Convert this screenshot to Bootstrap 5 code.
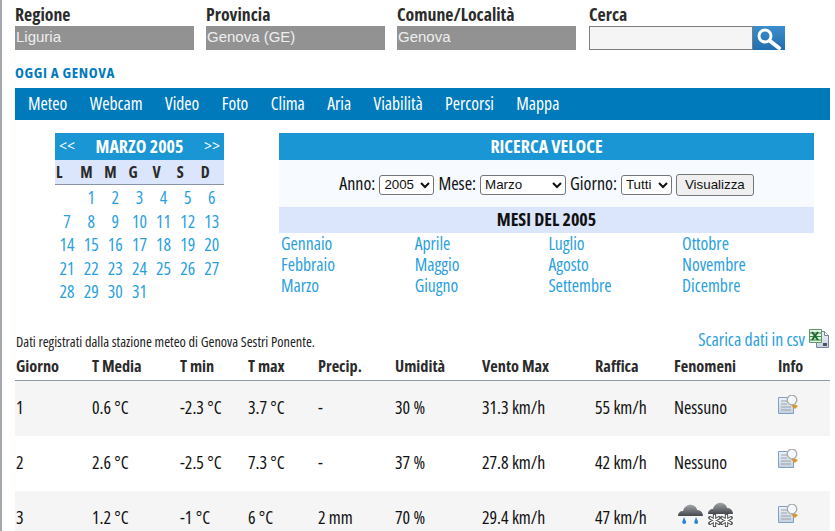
<!DOCTYPE html>
<html lang="it">
<head>
    <meta charset="UTF-8">
    <meta name="viewport" content="width=device-width, initial-scale=1.0">
    <title>Archivio meteo Genova</title>
    <link href="https://cdn.jsdelivr.net/npm/bootstrap@5.3.0/dist/css/bootstrap.min.css" rel="stylesheet">
    <style>
        body {
            font-family: "Open Sans", sans-serif;
            font-stretch: 75%;
            font-size: 16px;
            color: #111;
            background: #fff;
            border-left: 2px solid #a3a9ae;
            overflow: hidden;
            height: 531px;
        }
        a { color: #2a9fdf; text-decoration: none; }
        .page-wrap { width: 815px; margin-left: 13px; }
        .filter-row { padding-top: 3px; height: 66px; }
        .filter-col { width: 191px; flex: none; }
        .filter-search { margin-left: 1px; }
        .filter-label { font-weight: 700; font-size: 17.8px; line-height: 23px; color: #2b2b2b; }
        .filter-box {
            width: 179px; height: 24px; background: #929292; color: #eee;
            font: 15px/22px "Liberation Sans", sans-serif; padding-left: 1px;
        }
        .search-input {
            width: 164px; height: 24px; background: #f5f5f5; border: 1px solid #7d7d7d;
            display: block; padding: 0; flex: none;
        }
        .search-btn { width: 32px; height: 24px; background: linear-gradient(#3c8dcc, #1f6fb0); border: 0; padding: 0; flex: none; }
        .search-btn svg { display: block; }
        .today-title { font-weight: 700; font-size: 15px; letter-spacing: .6px; color: #017abc; line-height: 12px; height: 22px; margin: 0; }
        .main-menu { background: #017abc; height: 32px; padding-left: 13px; gap: 22.4px; font-size: 17.6px; line-height: 30px; }
        .main-menu a { color: #fff; }
        .top-area { height: 206px; padding-top: 13px; }
        .cal-box { width: 169px; margin-left: 40px; margin-right: 55px; }
        .blue-head { background: #1a96d4; color: #fff; font-weight: 700; font-size: 18px; height: 27px; line-height: 27px; }
        .blue-head a { color: #fff; font: 14px/25px "Open Sans", sans-serif; font-stretch: 100%; }
        .cal-grid { display: grid; grid-template-columns: repeat(7, 24.14px); text-align: center; font-size: 17.6px; line-height: 23.6px; }
        .cal-dates { padding-top: 1px; }
        .cal-days { background: #dbe6fd; font-weight: 700; font-size: 16px; height: 25px; line-height: 25px; border-bottom: 1px solid #8a93a8; color: #2b2b2b; text-align: left; padding-left: 1px; }
        .quick-box { width: 535px; }
        .quick-form { background: #f7faff; height: 47px; font-size: 18px; gap: 4px; }
        .quick-form select {
            font: 13.33px "Liberation Sans", sans-serif; height: 20px; background: #fff; color: #111;
            border: 1px solid #767676; border-radius: 3px; padding: 0; margin-top: 2px;
        }
        .quick-form button {
            font: 13.33px "Liberation Sans", sans-serif; height: 22px; padding: 0 8px; margin-top: 2px;
            border: 1px solid #767676; border-radius: 3px; background: #efefef; color: #111;
        }
        .sel-year { width: 55px; }
        .sel-month { width: 86px; }
        .sel-day { width: 51px; }
        .months-head { background: #dbe6fd; font-weight: 700; font-size: 18px; height: 26px; line-height: 24px; color: #111; }
        .months-grid { display: grid; grid-template-columns: repeat(4, 133.7px); grid-auto-flow: column; grid-template-rows: repeat(3, 21px); padding-left: 2px; font-size: 17.6px; line-height: 21px; }
        .note-row { height: 28px; padding-bottom: 3px; }
        .note-text { font-size: 14.3px; color: #222; line-height: 18px; padding-left: 1px; }
        .csv-link { font-size: 17.8px; line-height: 20px; margin-bottom: 2px; margin-right: 1px; }
        .csv-link svg { margin-top: -1px; }
        .meteo-table { width: 815px; table-layout: fixed; border-collapse: collapse; font-size: 17.8px; }
        .meteo-table th { font-weight: 700; font-size: 16.3px; height: 26px; border-bottom: 1px solid #8f98a6; color: #2b2b2b; padding: 0 0 2px 0; }
        .meteo-table td { height: 55px; padding: 0 0 2px 0; color: #111; }
        .meteo-table th:first-child, .meteo-table td:first-child { padding-left: 1px; }
        .meteo-table tr.shade td { background: #f5f5f5; }
        .info-ico { display: block; margin-bottom: 7px; }
        .wx-list { gap: 5px; padding-left: 4px; }
        .wx-list svg { display: block; flex: none; }
        .wx-snow { margin-top: -3px; }
    </style>
</head>
<body>
<svg width="0" height="0" class="position-absolute">
    <defs>
        <linearGradient id="cloud-fill" x1="0" y1="0" x2="0" y2="1">
            <stop offset="0" stop-color="#a2a4a7"/>
            <stop offset="1" stop-color="#44484d"/>
        </linearGradient>
        <linearGradient id="doc-fill" x1="0" y1="0" x2="0" y2="1">
            <stop offset="0" stop-color="#eef3f9"/>
            <stop offset="1" stop-color="#c6d0dc"/>
        </linearGradient>
        <symbol id="info-ico" viewBox="0 0 20 19">
            <path d="M.5 2.500h15v16H.5z" fill="url(#doc-fill)" stroke="#7f9fc6"/>
            <path d="M3 6h6M3 9h6M3 12h10M3 15h10" stroke="#9aa2ad"/>
            <path d="M15 8.500l5 2.500-3 3-3.500-3z" fill="#d99a2b"/>
            <circle cx="14" cy="5" r="4.800" fill="#f4f7fb" stroke="#a8a8a8" stroke-width="1.300"/>
        </symbol>
        <symbol id="cloud-ico" viewBox="0 0 25 12">
            <path d="M0 12c0-3 2-5 5-5 1-4 5-7 9-6 3 .5 5 3 5 5 3 0 6 2 6 6z" fill="url(#cloud-fill)"/>
        </symbol>
        <symbol id="flake-ico" viewBox="0 0 14 14">
            <path d="M7 1v12M2 4l10 6M12 4L2 10" stroke="#4d4f52" stroke-width="3.600" stroke-linecap="round"/>
            <path d="M7 1.500v11M2.500 4.200l9 5.600M11.500 4.200l-9 5.600" stroke="#fff" stroke-width="1.500" stroke-linecap="round"/>
        </symbol>
    </defs>
</svg>
<div class="page-wrap">
    <div class="filter-row d-flex">
        <div class="filter-col"><div class="filter-label">Regione</div><div class="filter-box">Liguria</div></div>
        <div class="filter-col"><div class="filter-label">Provincia</div><div class="filter-box">Genova (GE)</div></div>
        <div class="filter-col"><div class="filter-label">Comune/Località</div><div class="filter-box">Genova</div></div>
        <div class="filter-col filter-search">
            <div class="filter-label">Cerca</div>
            <div class="d-flex">
                <input class="search-input" type="text" aria-label="Cerca">
                <button class="search-btn" type="button" aria-label="Cerca">
                    <svg width="32" height="24" viewBox="0 0 32 24"><circle cx="12" cy="10" r="6" fill="none" stroke="#fff" stroke-width="3"/><path d="M17 15l9 7" stroke="#fff" stroke-width="4" stroke-linecap="round"/></svg>
                </button>
            </div>
        </div>
    </div>
    <h1 class="today-title">OGGI A GENOVA</h1>
    <nav class="main-menu d-flex">
        <a href="#">Meteo</a><a href="#">Webcam</a><a href="#">Video</a><a href="#">Foto</a><a href="#">Clima</a><a href="#">Aria</a><a href="#">Viabilità</a><a href="#">Percorsi</a><a href="#">Mappa</a>
    </nav>
    <div class="top-area d-flex">
        <div class="cal-box">
            <div class="blue-head d-flex justify-content-between px-1">
                <a href="#">&lt;&lt;</a><span>MARZO 2005</span><a href="#">&gt;&gt;</a>
            </div>
            <div class="cal-grid cal-days"><span>L</span><span>M</span><span>M</span><span>G</span><span>V</span><span>S</span><span>D</span></div>
            <div class="cal-grid cal-dates">
                <span></span><a href="#">1</a><a href="#">2</a><a href="#">3</a><a href="#">4</a><a href="#">5</a><a href="#">6</a>
                <a href="#">7</a><a href="#">8</a><a href="#">9</a><a href="#">10</a><a href="#">11</a><a href="#">12</a><a href="#">13</a>
                <a href="#">14</a><a href="#">15</a><a href="#">16</a><a href="#">17</a><a href="#">18</a><a href="#">19</a><a href="#">20</a>
                <a href="#">21</a><a href="#">22</a><a href="#">23</a><a href="#">24</a><a href="#">25</a><a href="#">26</a><a href="#">27</a>
                <a href="#">28</a><a href="#">29</a><a href="#">30</a><a href="#">31</a>
            </div>
        </div>
        <div class="quick-box">
            <div class="blue-head text-center">RICERCA VELOCE</div>
            <form class="quick-form d-flex justify-content-center align-items-center">
                <span>Anno:</span>
                <select class="sel-year"><option>2005</option></select>
                <span>Mese:</span>
                <select class="sel-month"><option>Marzo</option></select>
                <span>Giorno:</span>
                <select class="sel-day"><option>Tutti</option></select>
                <button type="button">Visualizza</button>
            </form>
            <div class="months-head text-center">MESI DEL 2005</div>
            <div class="months-grid">
                <a href="#">Gennaio</a><a href="#">Febbraio</a><a href="#">Marzo</a>
                <a href="#">Aprile</a><a href="#">Maggio</a><a href="#">Giugno</a>
                <a href="#">Luglio</a><a href="#">Agosto</a><a href="#">Settembre</a>
                <a href="#">Ottobre</a><a href="#">Novembre</a><a href="#">Dicembre</a>
            </div>
        </div>
    </div>
    <div class="note-row d-flex justify-content-between align-items-end">
        <div class="note-text">Dati registrati dalla stazione meteo di Genova Sestri Ponente.</div>
        <a class="csv-link d-flex align-items-center gap-1" href="#">Scarica dati in csv
            <svg width="20" height="19" viewBox="0 0 20 19"><path d="M7.500 2.500h8l4 4v12h-12z" fill="url(#doc-fill)" stroke="#75859a"/><path d="M15.500 2.500v4h4" fill="#fff" stroke="#75859a"/><path d="M14 14h4v3h-4z" fill="#4a5564"/><path d="M.5.500h12v13H.5z" fill="#e6f2e4" stroke="#5c9a63"/><path d="M1 4h11M1 7.500h11M1 11h11" stroke="#2f8a45"/><path d="M3 3l6 8M9 3l-6 8" stroke="#1c6b2f" stroke-width="2"/></svg>
        </a>
    </div>
    <table class="meteo-table">
        <colgroup>
            <col style="width:77px"><col style="width:88px"><col style="width:68px"><col style="width:70px"><col style="width:77px"><col style="width:87px"><col style="width:113px"><col style="width:79px"><col style="width:104px"><col style="width:52px">
        </colgroup>
        <thead>
            <tr><th>Giorno</th><th>T Media</th><th>T min</th><th>T max</th><th>Precip.</th><th>Umidità</th><th>Vento Max</th><th>Raffica</th><th>Fenomeni</th><th>Info</th></tr>
        </thead>
        <tbody>
            <tr class="shade"><td>1</td><td>0.6 °C</td><td>-2.3 °C</td><td>3.7 °C</td><td>-</td><td>30 %</td><td>31.3 km/h</td><td>55 km/h</td><td>Nessuno</td><td><svg class="info-ico" width="20" height="19"><use href="#info-ico"/></svg></td></tr>
            <tr><td>2</td><td>2.6 °C</td><td>-2.5 °C</td><td>7.3 °C</td><td>-</td><td>37 %</td><td>27.8 km/h</td><td>42 km/h</td><td>Nessuno</td><td><svg class="info-ico" width="20" height="19"><use href="#info-ico"/></svg></td></tr>
            <tr class="shade"><td>3</td><td>1.2 °C</td><td>-1 °C</td><td>6 °C</td><td>2 mm</td><td>70 %</td><td>29.4 km/h</td><td>47 km/h</td>
                <td>
                    <div class="wx-list d-flex align-items-start">
                        <svg width="25" height="26" viewBox="0 0 25 26"><use href="#cloud-ico" width="25" height="12"/><path d="M6 13l-1.800 5a2 2 0 0 0 4 0zM18 13l-1.800 5a2 2 0 0 0 4 0z" fill="#2d82d6"/></svg>
                        <svg class="wx-snow" width="25" height="28" viewBox="0 0 25 28"><use href="#cloud-ico" width="25" height="14"/><use href="#flake-ico" x="0" y="13" width="13" height="13"/><use href="#flake-ico" x="12" y="13" width="13" height="13"/></svg>
                    </div>
                </td>
                <td><svg class="info-ico" width="20" height="19"><use href="#info-ico"/></svg></td></tr>
        </tbody>
    </table>
</div>
<script src="https://cdn.jsdelivr.net/npm/bootstrap@5.3.0/dist/js/bootstrap.bundle.min.js"></script>
</body>
</html>
